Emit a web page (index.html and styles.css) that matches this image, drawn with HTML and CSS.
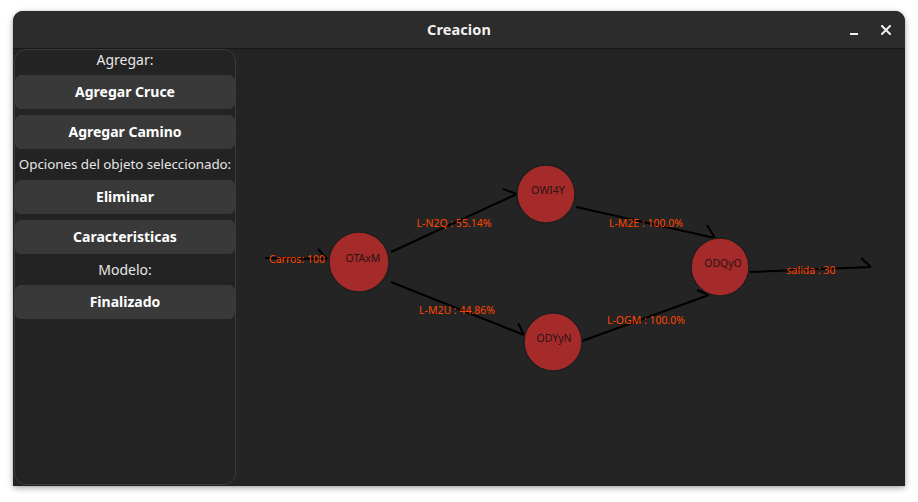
FILE: index.html
```html
<!DOCTYPE html>
<html lang="es">
<head>
<meta charset="utf-8">
<title>Creacion</title>
<link rel="stylesheet" href="styles.css">
</head>
<body>
<div class="window">
  <header class="titlebar">
    <span class="title">Creacion</span>
    <div class="controls">
      <span class="ctl ctl-min"></span>
      <span class="ctl ctl-close">
        <svg width="10" height="10" viewBox="0 0 10 10"><path d="M1 1L9 9M9 1L1 9" stroke="#f0f0f0" stroke-width="2" stroke-linecap="square"/></svg>
      </span>
    </div>
  </header>
  <main class="content">
    <aside class="sidebar">
      <div class="label">Agregar:</div>
      <button class="btn">Agregar Cruce</button>
      <button class="btn">Agregar Camino</button>
      <div class="label label-narrow">Opciones del objeto seleccionado:</div>
      <button class="btn">Eliminar</button>
      <button class="btn">Caracteristicas</button>
      <div class="label">Modelo:</div>
      <button class="btn">Finalizado</button>
    </aside>
    <div class="canvas">
      <svg class="graph" width="669" height="437" viewBox="236 49 669 437">
        <g class="edges" stroke="#000" stroke-width="2" fill="none">
          <path d="M265 258 L327 259 M318 249 L327 259"/>
          <path d="M391 252 L517 194 M503 189 L517 194"/>
          <path d="M391 282 L524 335 M518 323 L524 335"/>
          <path d="M576 207 L715 238 M707 225 L715 238"/>
          <path d="M582 341 L709 295 M697 290 L709 295"/>
          <path d="M750 272 L871 267 M861 258 L871 267"/>
        </g>
        <g class="nodes">
          <circle cx="359" cy="262" r="30"/>
          <circle cx="546" cy="194" r="29"/>
          <circle cx="720" cy="267" r="29"/>
          <circle cx="553" cy="342" r="29"/>
        </g>
        <g class="node-labels">
          <text x="363" y="262">OTAxM</text>
          <text x="548" y="194">OWI4Y</text>
          <text x="723" y="267">ODQyO</text>
          <text x="554" y="342">ODYyN</text>
        </g>
        <g class="edge-labels">
          <text x="297" y="263">Carros: 100</text>
          <text x="454" y="227">L-N2Q : 55.14%</text>
          <text x="457" y="314">L-M2U : 44.86%</text>
          <text x="646" y="227">L-M2E : 100.0%</text>
          <text x="646" y="324">L-OGM : 100.0%</text>
          <text x="811" y="274">salida : 30</text>
        </g>
      </svg>
    </div>
  </main>
</div>
</body>
</html>
```

FILE: styles.css
```css
* { box-sizing: border-box; }
html, body { margin: 0; padding: 0; background: #ffffff; }
body {
  width: 918px;
  height: 502px;
  overflow: hidden;
  font-family: "Noto Sans", "Open Sans", sans-serif;
}
.window {
  margin: 11px 0 0 13px;
  width: 892px;
  height: 475px;
  border-radius: 10px 10px 0 0;
  background: #242424;
  box-shadow: 0 2px 6px rgba(0,0,0,0.35), 0 0 1px rgba(0,0,0,0.4);
  overflow: hidden;
  display: flex;
  flex-direction: column;
}
.titlebar {
  height: 38px;
  flex: none;
  background: #2c2c2c;
  border-bottom: 1px solid #171717;
  position: relative;
  display: flex;
  align-items: center;
  justify-content: center;
  padding-bottom: 2px;
}
.title {
  color: #f2f2f2;
  font-weight: 700;
  font-size: 14.5px;
  letter-spacing: 0.1px;
}
.controls {
  position: absolute;
  right: 14px;
  top: 0;
  height: 37px;
  display: flex;
  align-items: center;
  gap: 22px;
}
.ctl { display: flex; align-items: center; justify-content: center; width: 10px; height: 10px; }
.ctl-min::before {
  content: "";
  display: block;
  width: 8px;
  height: 2px;
  margin-top: 8px;
  background: #f0f0f0;
}
.content {
  flex: 1;
  display: flex;
  padding: 0 0 1px 1px;
  min-height: 0;
}
.sidebar {
  width: 222px;
  flex: none;
  border: 1px solid #3b3b3b;
  border-radius: 12px;
  background: #232323;
  display: flex;
  flex-direction: column;
  gap: 6px;
}
.label {
  height: 19px;
  line-height: 19px;
  text-align: center;
  color: #e6e6e6;
  font-size: 14px;
  white-space: nowrap;
}
.label-narrow {
  font-size: 13.4px;
  letter-spacing: -0.05px;
}
.btn {
  height: 34px;
  border: none;
  border-radius: 6px;
  background: #393939;
  color: #ffffff;
  font-family: "Noto Sans", "Open Sans", sans-serif;
  font-weight: 700;
  font-size: 14px;
  padding: 0 0 1px;
  margin: 0;
  width: 100%;
}
.canvas {
  flex: 1;
  min-width: 0;
}
.graph { display: block; }
.nodes circle {
  fill: #a52a2a;
  stroke: #1e1e1e;
  stroke-width: 1.5;
}
.node-labels text {
  font-family: "Noto Sans", "Open Sans", sans-serif;
  font-size: 10.5px;
  fill: #2a1414;
  text-anchor: middle;
}
.edge-labels text {
  font-family: "Noto Sans", "Open Sans", sans-serif;
  font-size: 10.5px;
  fill: #ff4500;
  text-anchor: middle;
}
```
